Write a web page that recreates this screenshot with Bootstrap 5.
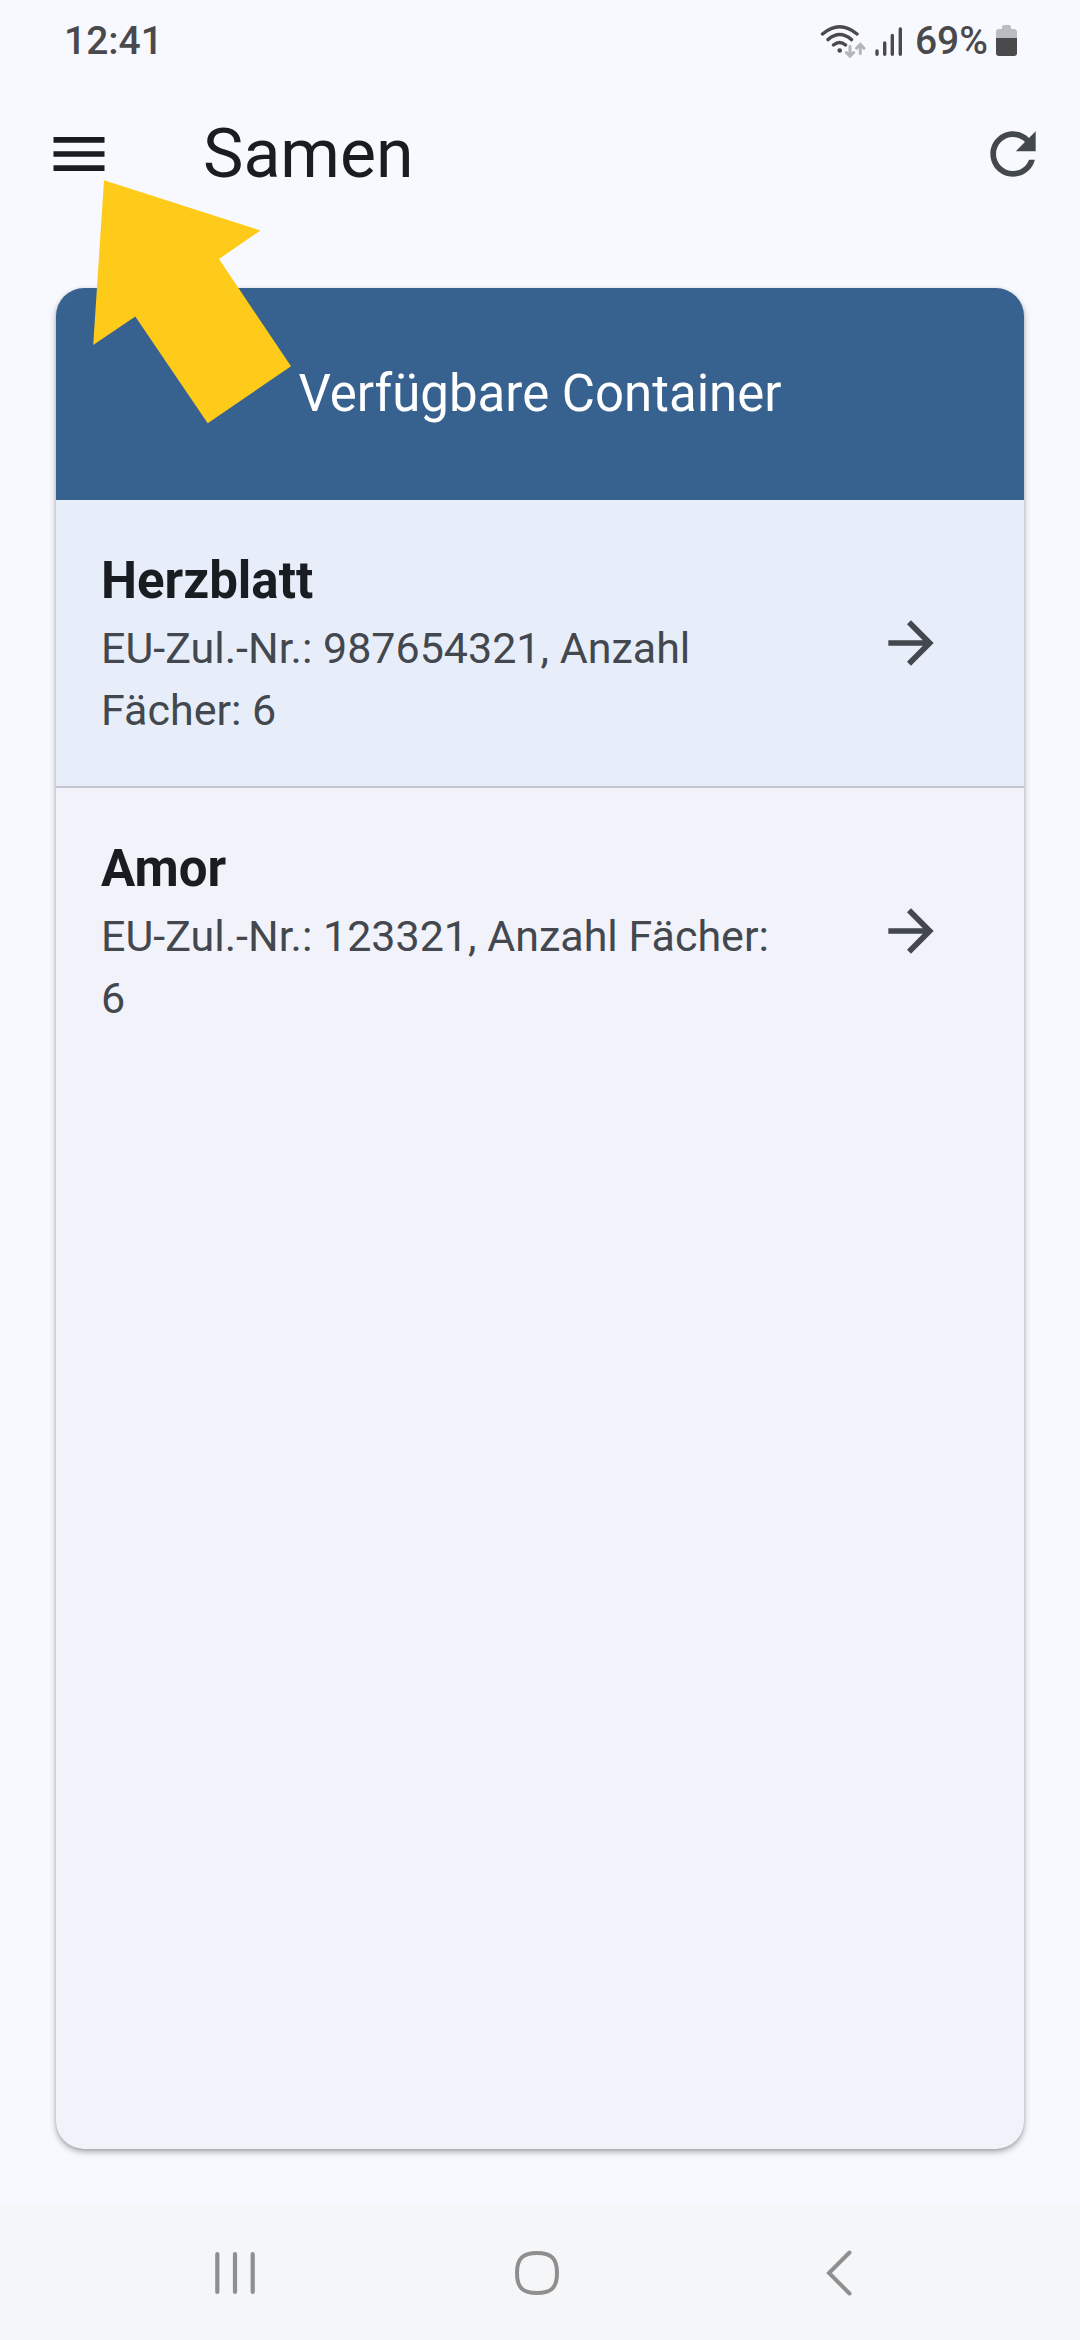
<!DOCTYPE html>
<html lang="de">
<head>
<meta charset="utf-8">
<meta name="viewport" content="width=device-width, initial-scale=1">
<title>Samen</title>
<link rel="stylesheet" href="https://cdn.jsdelivr.net/npm/bootstrap@5.3.0/dist/css/bootstrap.min.css">
<style>
  body { background: #f8f9ff; color: #191c20; font-family: Roboto, "Noto Sans", sans-serif; }
  svg { display: block; flex: none; }
  .icon-btn { color: #191c20; }
  .icon-btn.muted, .go-link { color: #43474e; }
  .status-bar { height: 76px; padding: 6px 62px 0 64px; font-size: 39px; font-weight: 500; line-height: 70px; color: #4a4a4d; }
  .app-bar { height: 156px; padding: 0 33px 0 45px; }
  .app-title { font-size: 68px; line-height: 84px; margin-left: 90px; font-weight: 400; }
  .content { padding: 56px; }
  .box-card { border-radius: 28px; background: #f2f2fb; box-shadow: 0 3px 6px rgba(0,0,0,.3), 0 1px 3px rgba(0,0,0,.12); }
  .box-head { background: #37618e; color: #fff; font-size: 51px; line-height: 72px; padding: 70px 45px; font-weight: 400; }
  .box-row { padding: 45px 79px 45px 45px; border-bottom: 2px solid transparent; }
  .box-row.selected { background: #e7eefa; border-bottom-color: #c3c6cf; }
  .box-text { max-width: 676px; }
  .box-name { font-size: 51px; line-height: 72px; font-weight: 700; }
  .box-info { font-size: 43px; line-height: 62px; color: #43474e; }
  .nav-strip { height: 135px; background: #f5f6f8; padding: 0 90px 0 84px; color: #8f8f8f; }
  .pointer { left: 92px; top: 180px; z-index: 5; pointer-events: none; }
</style>
</head>
<body>
<div class="d-flex flex-column min-vh-100 position-relative">
  <div class="status-bar d-flex justify-content-between align-items-center">
    <span>12:41</span>
    <div class="d-flex align-items-center gap-2">
      <svg width="46" height="34" viewBox="820 24 46 34" fill="none" stroke="#4a4a4d" stroke-width="3.4" stroke-linecap="round" aria-hidden="true">
        <path d="M822.5 34Q839.700 19.500 857 34M828 39.600Q839.700 29.500 851.500 39.600M833.500 45Q839.700 40 845.500 45"/>
        <circle cx="839.700" cy="50.500" r="2.300" fill="#4a4a4d" stroke="none"/>
        <path stroke="#b4b5b9" stroke-width="3" d="M850 46.500V56M846.300 52.500L850 56.200L853.700 52.500M860.300 53.500V44.500M856.500 48.200L860.300 44.300L864 48.200"/>
      </svg>
      <svg width="29" height="34" viewBox="874 24 29 34" stroke="#4a4a4d" stroke-width="3.400" stroke-linecap="round" aria-hidden="true">
        <path d="M877 51V54.300M884.700 43V54.300M892.300 35.500V54.300M900.300 29V54.300"/>
      </svg>
      <span class="ms-1">69%</span>
      <svg width="22" height="32" viewBox="0 0 22 32" aria-hidden="true">
        <path fill="#bbbcc1" d="M6 4V2Q6 0 8 0H13Q15 0 15 2V4H18Q21 4 21 7V13H0V7Q0 4 3 4Z"/>
        <path fill="#4a4a4d" d="M0 13H21V28Q21 31 18 31H3Q0 31 0 28Z"/>
      </svg>
    </div>
  </div>

  <header class="app-bar d-flex align-items-center">
    <button type="button" class="btn icon-btn border-0 p-0" aria-label="Menü">
      <svg width="68" height="68" viewBox="0 0 24 24" fill="currentColor"><path d="M3 18h18v-2H3v2zm0-5h18v-2H3v2zm0-7v2h18V6H3z"/></svg>
    </button>
    <h1 class="app-title mb-0">Samen</h1>
    <button type="button" class="btn icon-btn muted border-0 p-0 ms-auto" aria-label="Aktualisieren">
      <svg width="68" height="68" viewBox="0 0 24 24" fill="currentColor"><path d="M17.650 6.350C16.200 4.900 14.210 4 12 4c-4.420 0-7.990 3.580-7.990 8s3.570 8 7.990 8c3.730 0 6.840-2.550 7.730-6h-2.080c-.82 2.330-3.040 4-5.650 4-3.310 0-6-2.690-6-6s2.690-6 6-6c1.660 0 3.140.69 4.220 1.780L13 11h7V4l-2.350 2.350z"/></svg>
    </button>
  </header>

  <main class="content d-flex flex-column flex-grow-1">
    <section class="box-card flex-grow-1 overflow-hidden">
      <h2 class="box-head text-center mb-0">Verfügbare Container</h2>
      <ul class="list-unstyled mb-0">
        <li class="box-row selected d-flex align-items-center justify-content-between">
          <div class="box-text">
            <div class="box-name">Herzblatt</div>
            <div class="box-info">EU-Zul.-Nr.: 987654321, Anzahl Fächer: 6</div>
          </div>
          <a href="#" class="go-link" aria-label="Herzblatt öffnen">
            <svg width="68" height="68" viewBox="0 0 24 24" fill="currentColor"><path d="M12 4l-1.410 1.410L16.170 11H4v2h12.170l-5.580 5.590L12 20l8-8z"/></svg>
          </a>
        </li>
        <li class="box-row d-flex align-items-center justify-content-between">
          <div class="box-text">
            <div class="box-name">Amor</div>
            <div class="box-info">EU-Zul.-Nr.: 123321, Anzahl Fächer: 6</div>
          </div>
          <a href="#" class="go-link" aria-label="Amor öffnen">
            <svg width="68" height="68" viewBox="0 0 24 24" fill="currentColor"><path d="M12 4l-1.410 1.410L16.170 11H4v2h12.170l-5.580 5.590L12 20l8-8z"/></svg>
          </a>
        </li>
      </ul>
    </section>
  </main>

  <nav class="nav-strip d-flex" aria-label="System">
    <button type="button" class="btn border-0 p-0 w-100 text-reset d-flex align-items-center justify-content-center" aria-label="Letzte Apps">
      <svg width="44" height="44" viewBox="0 0 44 44" stroke="currentColor" stroke-width="4.200" stroke-linecap="round"><path d="M4.300 3V41M22 3V41M39.700 3V41"/></svg>
    </button>
    <button type="button" class="btn border-0 p-0 w-100 text-reset d-flex align-items-center justify-content-center" aria-label="Startseite">
      <svg width="44" height="44" viewBox="0 0 44 44" fill="none" stroke="currentColor" stroke-width="4"><path d="M22 2C36 2 42 7 42 22S36 42 22 42S2 37 2 22S8 2 22 2Z"/></svg>
    </button>
    <button type="button" class="btn border-0 p-0 w-100 text-reset d-flex align-items-center justify-content-center" aria-label="Zurück">
      <svg width="26" height="46" viewBox="0 0 26 46" fill="none" stroke="currentColor" stroke-width="4" stroke-linecap="round"><path d="M23.500 2.500L3 23L23.500 43.500"/></svg>
    </button>
  </nav>

  <svg class="pointer position-absolute" width="202" height="246" viewBox="92 180 202 246" fill="#ffcb1a" aria-hidden="true">
    <path d="M104 180.300L260.500 230.500L219 259L291 366.300L207.700 423.300L135.300 316.500L93.200 345Z"/>
  </svg>
</div>
<script src="https://cdn.jsdelivr.net/npm/bootstrap@5.3.0/dist/js/bootstrap.bundle.min.js"></script>
</body>
</html>
